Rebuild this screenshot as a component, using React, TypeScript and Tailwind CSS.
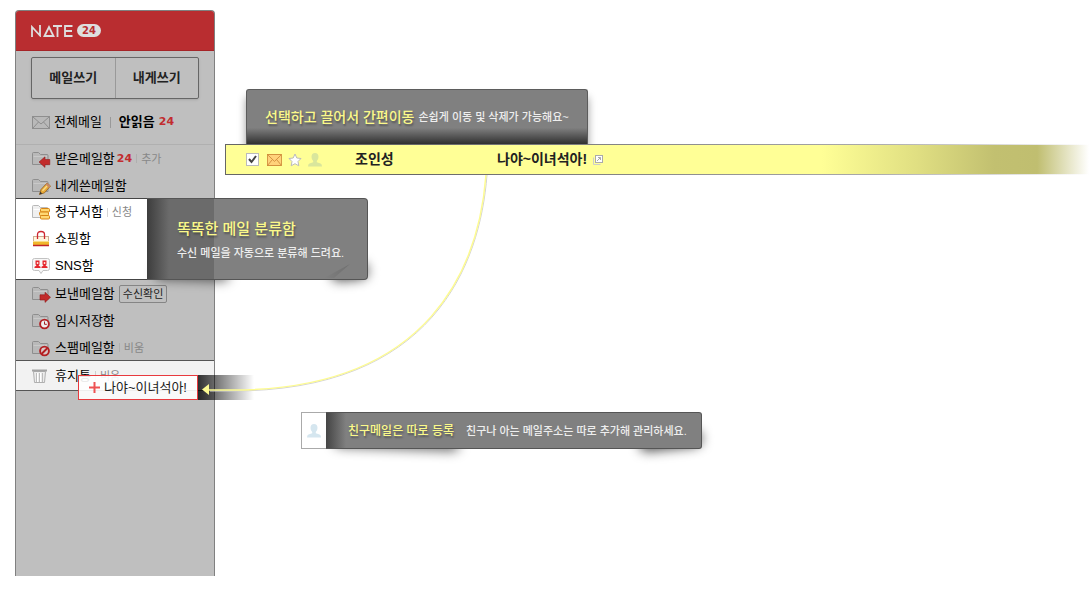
import type { ReactNode } from "react";

function Folder({ light = false, children }: { light?: boolean; children?: ReactNode }) {
  return (
    <svg width="20" height="18" viewBox="0 0 20 18" fill="none" aria-hidden="true" className="shrink-0">
      <path
        d="M1.500 14.500V3.500Q1.500 2.500 2.500 2.500H7.500L9.500 4.500H16Q17 4.500 17 5.500V14.500Z"
        fill={light ? "#f0f0f0" : "#b9b9b9"}
        stroke={light ? "#b9b9b9" : "#8e8e8e"}
      />
      <path d="M2.500 6.500H16" stroke={light ? "#ffffff" : "#c9c9c9"} />
      {children}
    </svg>
  );
}

const InboxIcon = () => (
  <Folder>
    <path d="M8 12L14 6.800V9.500H18.800V14.700H14V17.400Z" fill="#c22c2c" stroke="#8f1c1c" strokeWidth=".6" />
  </Folder>
);

const SentIcon = () => (
  <Folder>
    <path d="M19.500 12.300L14 7.300V9.800H9V15H14V17.400Z" fill="#c22c2c" stroke="#8f1c1c" strokeWidth=".6" />
  </Folder>
);

const PencilIcon = () => (
  <Folder>
    <path d="M8.500 17.500L10 12.500L16 6L19.500 9L13.500 15.800Z" fill="#e8ab3a" stroke="#93601c" strokeWidth=".8" />
    <path d="M16 6L19.500 9L18 10.700L14.500 7.600Z" fill="#c98a6a" />
    <path d="M11.500 13.800L16 9" stroke="#f9dc8b" strokeWidth="1.300" />
    <path d="M8.500 17.500L9.300 14.700L11.300 16.600Z" fill="#333333" />
  </Folder>
);

const BillIcon = () => (
  <Folder light>
    <g fill="#ffd873" stroke="#d68414">
      <rect x="9.500" y="5.500" width="9" height="3.500" rx="1" />
      <rect x="8.500" y="9" width="9" height="3.500" rx="1" />
      <rect x="9.500" y="12.500" width="9" height="3.500" rx="1" />
    </g>
  </Folder>
);

const DraftIcon = () => (
  <Folder>
    <circle cx="13.500" cy="12" r="4.400" fill="#eeeeee" stroke="#b31f22" strokeWidth="1.900" />
    <path d="M13.500 9.500V12.300H15.800" stroke="#a32022" />
  </Folder>
);

const SpamIcon = () => (
  <Folder>
    <circle cx="13.500" cy="12" r="4.400" fill="#d9c8c8" stroke="#b31f22" strokeWidth="1.900" />
    <path d="M10.500 15L16.500 9" stroke="#b31f22" strokeWidth="1.900" />
  </Folder>
);

const BagIcon = () => (
  <svg width="20" height="18" viewBox="0 0 20 18" fill="none" aria-hidden="true" className="shrink-0">
    <rect x="2.500" y="6.500" width="15" height="9" fill="#fff6df" stroke="#cfae93" />
    <path d="M2 12H18V15H2Z" fill="#f0b62b" />
    <path d="M2 11.500H18" stroke="#f7dd86" />
    <path d="M2 15.500H18" stroke="#c0242a" strokeWidth="1.500" />
    <path d="M6.500 9V4.500Q6.500 1.500 10 1.500T13.500 4.500V9" stroke="#cf2730" strokeWidth="1.300" />
  </svg>
);

const SnsIcon = () => (
  <svg width="20" height="18" viewBox="0 0 20 18" fill="none" aria-hidden="true" className="shrink-0">
    <path
      d="M3.500 1.500H16.500Q18.500 1.500 18.500 3.500V11.500Q18.500 13.500 16.500 13.500H12L10 16.500L8 13.500H3.500Q1.500 13.500 1.500 11.500V3.500Q1.500 1.500 3.500 1.500Z"
      fill="#f7f7f7"
      stroke="#c2c2c2"
    />
    <g fill="#e5272d">
      <path d="M4.500 3.500H8.500V7.500L7.500 8.500L9.500 9.700V11H3.500V9.700L5.500 8.500L4.500 7.500Z" />
      <path d="M11.500 3.500H15.500V7.500L14.500 8.500L16.500 9.700V11H10.500V9.700L12.500 8.500L11.500 7.500Z" />
    </g>
    <g fill="#ffd9cf">
      <rect x="5.800" y="5" width="1.500" height="2" />
      <rect x="12.800" y="5" width="1.500" height="2" />
    </g>
  </svg>
);

const TrashIcon = () => (
  <svg width="20" height="18" viewBox="0 0 20 18" fill="none" aria-hidden="true" className="shrink-0">
    <path d="M2.500 4.500H14.500L13.500 15.500H3.500Z" fill="#ececec" stroke="#b0b0b0" />
    <path d="M1 3.500H16" stroke="#a3a3a3" strokeWidth="2" />
    <path d="M5.500 6V15M8.500 6V15M11.500 6V15" stroke="#bcbcbc" />
    <path d="M6.500 6V15M9.500 6V15" stroke="#ffffff" />
  </svg>
);

const Envelope = ({ warm = false }: { warm?: boolean }) => (
  <svg
    width={warm ? 15 : 18}
    height={warm ? 12 : 13}
    viewBox="0 0 18 13"
    preserveAspectRatio="none"
    fill="none"
    stroke={warm ? "#d08a3a" : "#8e8e8e"}
    aria-hidden="true"
    className="shrink-0"
  >
    <rect x=".5" y=".5" width="17" height="12" fill={warm ? "#ffd27a" : "#b9b9b9"} />
    <path d="M1 1L9 8L17 1M1 12L6.500 6M17 12L11.500 6" />
  </svg>
);

const Person = ({ className }: { className: string }) => (
  <svg width="14" height="14" viewBox="0 0 14 14" fill="currentColor" aria-hidden="true" className={className}>
    <path d="M7 0Q10.500 0 10.500 4Q10.500 6.500 8.800 8V9.300L12.500 10.500Q14 11 14 13.500H0Q0 11 1.500 10.500L5.200 9.300V8Q3.500 6.500 3.500 4Q3.500 0 7 0Z" />
  </svg>
);

function MenuRow({
  icon,
  label,
  count,
  action,
  boxed = false,
}: {
  icon: ReactNode;
  label: string;
  count?: string;
  action?: string;
  boxed?: boolean;
}) {
  return (
    <li className="flex h-[27px] shrink-0 items-center pl-[15px] text-[13px] leading-4">
      {icon}
      <a href="#" className="ml-1 text-black">
        {label}
      </a>
      {count && <span className="ml-0.5 font-[DejaVu_Sans] text-[11px] font-bold text-[#c22c2f]">{count}</span>}
      {action && boxed && (
        <button className="ml-1 h-[18px] rounded-xs border border-[#858585] px-[3px] text-[11px] leading-4 text-[#222]">
          {action}
        </button>
      )}
      {action && !boxed && (
        <>
          <span className="mx-1 h-[9px] w-px bg-[#999]/40" />
          <a href="#" className="text-[11px] text-[#888]">
            {action}
          </a>
        </>
      )}
    </li>
  );
}

const titleText = "font-medium text-[#fbf98a] [text-shadow:1px_2px_2px_rgba(0,0,0,0.35)]";
const noteText = "text-[11px] leading-4 font-medium text-[#eeeeee]";

function CurledShadow() {
  return (
    <>
      <span className="absolute bottom-0 left-2 -z-10 h-3 w-1/3 rotate-2 rounded-full bg-black/60 blur-[6px]" />
      <span className="absolute right-0 bottom-0 -z-10 h-4 w-1/6 -rotate-6 rounded-full bg-black/70 blur-[6px]" />
    </>
  );
}

function Sidebar() {
  return (
    <aside className="relative z-10 w-[200px] shrink-0 rounded-t-[4px] border border-b-0 border-[#808080] bg-[#bfbfbf] pb-[185px]">
      <header className="flex h-10 items-center gap-1 rounded-t-[3px] border-b border-[#a52427] bg-[#b92d30] pl-[15px]">
        <svg width="42" height="12" viewBox="0 0 42 12" fill="none" stroke="#dedede" strokeWidth="1.800" role="img" aria-label="NATE">
          <path d="M1 12V2L9 10.500V0" />
          <path d="M13.500 11L18 2L22.500 11Z" />
          <path d="M22 1H31M26.500 1V12" />
          <path d="M41.500 1H34V11H41.500M34 6H41" />
        </svg>
        <span className="flex h-[13px] w-6 items-center justify-center rounded-full bg-[#dedede] font-[DejaVu_Sans] text-[10px] font-bold text-[#b92d30]">
          24
        </span>
      </header>

      <div className="mx-[15px] mt-[6px] flex h-[42px] rounded-xs border border-[#666] text-[13px] font-bold text-[#222] shadow-sm">
        <button className="flex-1 border-r border-[#999]">메일쓰기</button>
        <button className="flex-1">내게쓰기</button>
      </div>

      <div className="flex h-[46px] items-center border-b border-[#b0b0b0] pt-px pl-4 text-[13px] text-black">
        <Envelope />
        <a href="#" className="ml-1">
          전체메일
        </a>
        <span className="mx-2 h-[11px] w-px bg-[#999]" />
        <a href="#" className="font-bold">
          안읽음
        </a>
        <span className="ml-1 font-[DejaVu_Sans] text-[11px] font-bold text-[#c22c2f]">24</span>
      </div>

      <ul className="flex h-[53px] flex-col">
        <MenuRow icon={<InboxIcon />} label="받은메일함" count="24" action="추가" />
        <MenuRow icon={<PencilIcon />} label="내게쓴메일함" />
      </ul>

      <div className="relative">
        <ul className="flex h-[82px] flex-col justify-center border-y border-[#444] bg-white">
          <MenuRow icon={<BillIcon />} label="청구서함" action="신청" />
          <MenuRow icon={<BagIcon />} label="쇼핑함" />
          <MenuRow icon={<SnsIcon />} label="SNS함" />
        </ul>
        <div className="absolute top-0 left-[131px] isolate h-[82px] w-[221px]">
          <CurledShadow />
          <div className="flex h-full flex-col justify-center gap-1 overflow-hidden rounded-r-[4px] border border-l-0 border-[#555] bg-[linear-gradient(90deg,#3d3d3d_0,#6b6b6b_22px,#6b6b6b_67px,#808080_67px)] pl-[30px]">
            <strong className={`text-[15px] leading-6 ${titleText}`}>똑똑한 메일 분류함</strong>
            <span className={noteText}>수신 메일을 자동으로 분류해 드려요.</span>
          </div>
          <svg width="26" height="14" viewBox="0 0 26 14" aria-hidden="true" className="absolute right-[18px] bottom-[2px]">
            <defs>
              <linearGradient id="fold" x1="0" y1="0" x2="1" y2="0">
                <stop offset="0" stopColor="#808080" />
                <stop offset="1" stopColor="#6f6f6f" />
              </linearGradient>
            </defs>
            <path d="M0 14L26 0L10 14Z" fill="url(#fold)" />
          </svg>
        </div>
      </div>

      <ul className="flex h-20 flex-col">
        <MenuRow icon={<SentIcon />} label="보낸메일함" action="수신확인" boxed />
        <MenuRow icon={<DraftIcon />} label="임시저장함" />
        <MenuRow icon={<SpamIcon />} label="스팸메일함" action="비움" />
      </ul>

      <div className="relative">
        <ul className="flex h-[31px] flex-col justify-center border-y border-[#555] bg-[#f2f2f2]">
          <MenuRow icon={<TrashIcon />} label="휴지통" action="비움" />
        </ul>
        <div className="absolute top-[15px] left-[62px] flex h-[25px]">
          <div className="flex w-[120px] items-center justify-center gap-1 border border-[#e83a3e] bg-white/90 text-[13px] text-[#222]">
            <svg width="11" height="11" viewBox="0 0 11 11" stroke="#ee5253" strokeWidth="2" aria-hidden="true">
              <path d="M5.500 0V11M0 5.500H11" />
            </svg>
            나야~이녀석아!
          </div>
          <div className="w-14 bg-linear-to-r from-black/80 to-black/0" />
        </div>
      </div>
    </aside>
  );
}

function DragArrow() {
  return (
    <svg
      width="290"
      height="222"
      viewBox="0 0 290 222"
      fill="none"
      aria-hidden="true"
      className="pointer-events-none absolute top-full -left-[25px] z-20"
    >
      <path d="M287 0C280 90 233 217 30 216H10" stroke="#d2d2d2" />
      <path d="M286 0C279 90 232 216 30 215H9" stroke="#fdfb92" strokeWidth="1.500" />
      <path d="M2 214.500L9 209V220Z" fill="#fdfb92" />
    </svg>
  );
}

function MailRow() {
  return (
    <div className="relative">
      <div className="bg-linear-to-r from-[#666] from-20% via-[#aaa] via-75% to-white py-px pl-px">
        <div className="flex h-[29px] items-center bg-[linear-gradient(90deg,#ffff96_0,#ffff96_69%,#e0df82_80%,#c2c070_89%,#c0be70_94%,#ffffff_100%)] pl-5 text-[14px] font-bold text-[#222]">
          <label className="grid size-[13px] place-items-center">
            <input
              type="checkbox"
              defaultChecked
              aria-label="조인성 메일 선택"
              className="peer col-start-1 row-start-1 size-[13px] appearance-none border border-[#bbb] bg-white"
            />
            <svg
              width="9"
              height="9"
              viewBox="0 0 9 9"
              fill="none"
              stroke="#444"
              strokeWidth="2"
              aria-hidden="true"
              className="pointer-events-none invisible col-start-1 row-start-1 peer-checked:visible"
            >
              <path d="M1 4L3.500 7L8 1" />
            </svg>
          </label>
          <span className="ml-2 flex items-center gap-[6px]">
            <Envelope warm />
            <svg width="14" height="14" viewBox="0 0 14 14" fill="#fff" stroke="#bbb" aria-hidden="true">
              <path d="M7 1L8.800 5L13 5.500L10 8.500L10.800 12.800L7 10.700L3.200 12.800L4 8.500L1 5.500L5.200 5Z" />
            </svg>
            <Person className="text-[#d9e69c]" />
          </span>
          <span className="ml-[33px] w-[142px]">조인성</span>
          <a href="#">나야~이녀석아!</a>
          <svg width="10" height="10" viewBox="0 0 10 10" fill="#fff" stroke="#aaa" aria-hidden="true" className="ml-1.5">
            <path d="M.5 2.500V9.500H7.500" fill="none" stroke="#ccc" />
            <rect x="2.500" y=".5" width="7" height="7" />
            <path d="M4 6L7.500 2.500M5 2.500H7.500V5" />
          </svg>
        </div>
      </div>
      <DragArrow />
    </div>
  );
}

export default function App() {
  return (
    <div className="flex items-start overflow-hidden bg-white pt-[10px] pb-5 pl-[15px] font-['Liberation_Sans','Noto_Sans_CJK_KR',sans-serif]">
      <Sidebar />
      <main className="ml-[10px] min-w-0 flex-1 pt-[79px]">
        <section className="ml-[21px] flex h-[55px] w-[342px] items-center gap-1 rounded-t-[3px] border border-b-0 border-[#5c5c5c] bg-[linear-gradient(180deg,#808080_0,#808080_70%,#303030_100%)] pl-[18px] whitespace-nowrap shadow-[0_8px_8px_rgba(0,0,0,0.4)]">
          <strong className={`text-[14px] leading-6 ${titleText}`}>선택하고 끌어서 간편이동</strong>
          <span className={noteText}>손쉽게 이동 및 삭제가 가능해요~</span>
        </section>

        <MailRow />

        <section className="mt-[237px] ml-[76px] flex h-[37px] w-[401px]">
          <div className="flex w-[25px] items-center justify-center border border-r-0 border-[#aaa] bg-white">
            <Person className="text-[#d5e6ef]" />
          </div>
          <div className="relative isolate flex-1">
            <CurledShadow />
            <div className="flex h-full items-center gap-3 rounded-r-[3px] border border-l-0 border-[#555] bg-[linear-gradient(90deg,#444_0,#808080_20px)] pl-[22px] whitespace-nowrap">
              <strong className={`text-[12px] leading-6 ${titleText}`}>친구메일은 따로 등록</strong>
              <span className={noteText}>친구나 아는 메일주소는 따로 추가해 관리하세요.</span>
            </div>
          </div>
        </section>
      </main>
    </div>
  );
}
